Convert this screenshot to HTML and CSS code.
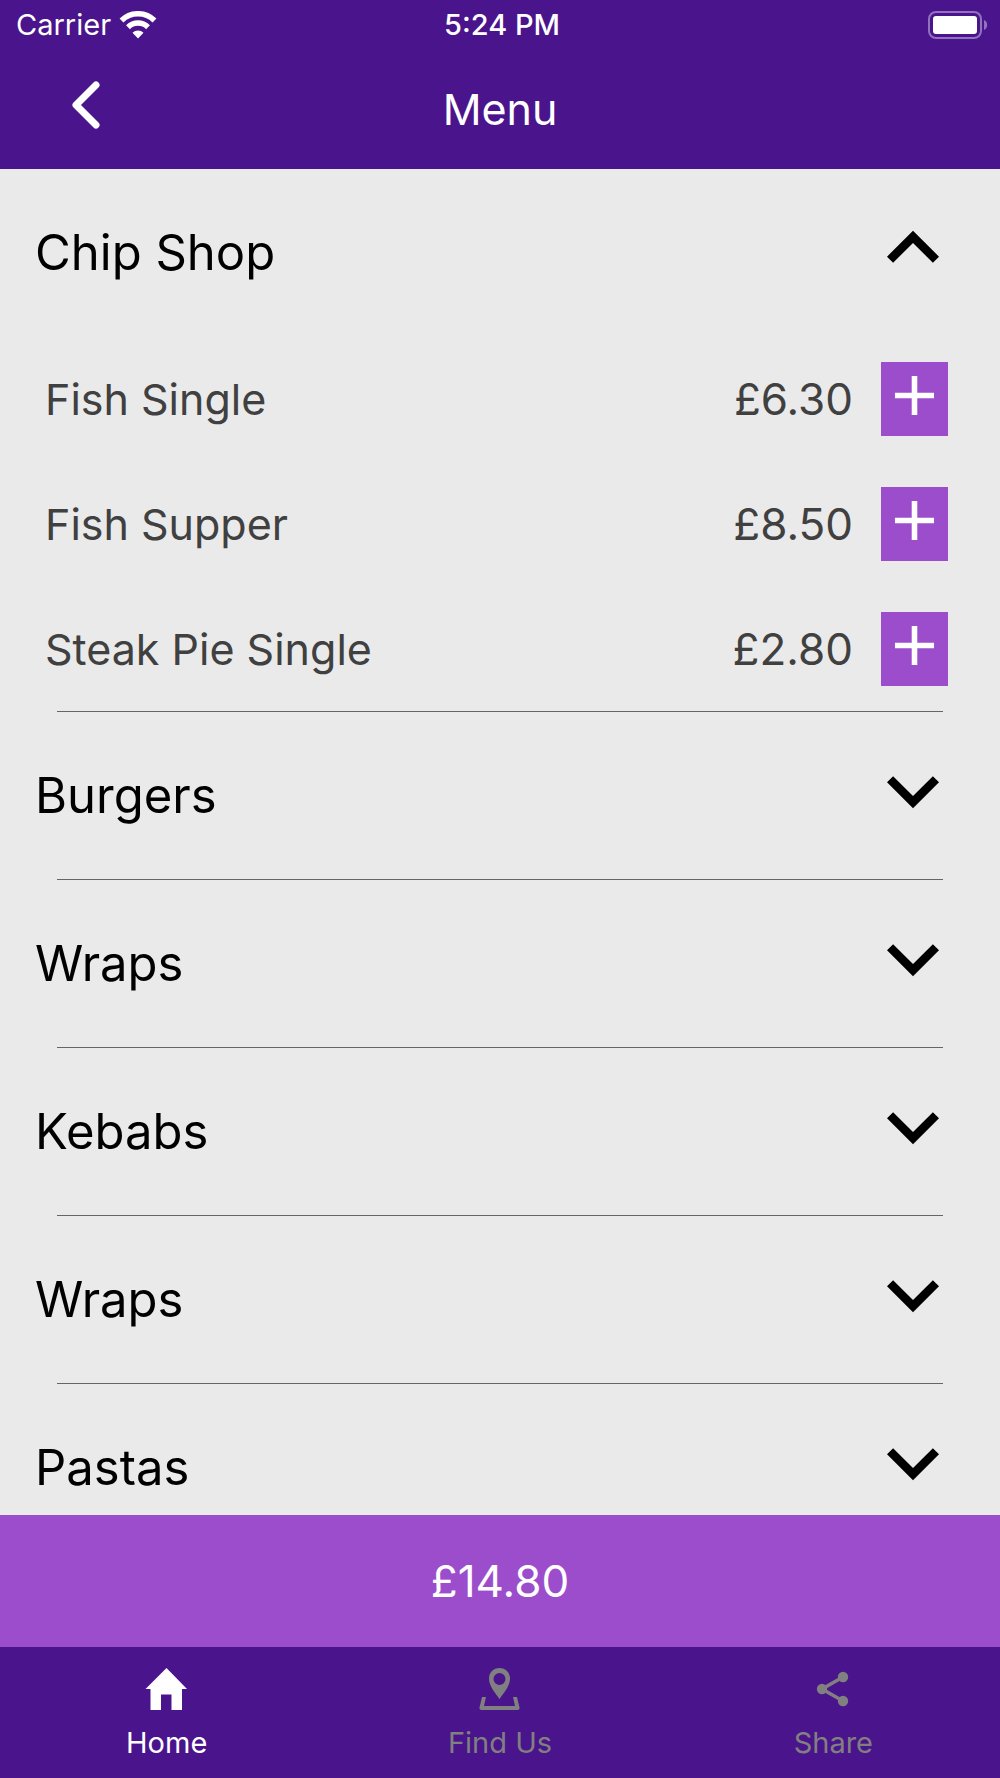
FILE: index.html
```html
<!DOCTYPE html>
<html lang="en">
<head>
  <meta charset="utf-8">
  <meta name="viewport" content="width=device-width, initial-scale=1">
  <title>Menu</title>
  <link rel="stylesheet" href="styles.css">
</head>
<body>
  <svg class="sprite" aria-hidden="true">
    <symbol id="chevron-down" viewBox="0 0 24 24"><path d="M16.59 8.59 12 13.17 7.41 8.59 6 10l6 6 6-6z"/></symbol>
    <symbol id="chevron-up" viewBox="0 0 24 24"><path d="M12 8l-6 6 1.41 1.41L12 10.83l4.59 4.58L18 14z"/></symbol>
    <symbol id="plus" viewBox="0 0 24 24"><path d="M19 13h-6v6h-2v-6H5v-2h6V5h2v6h6z"/></symbol>
  </svg>

  <div class="app">
    <header class="header">
      <div class="status">
        <div class="status-left">
          <span>Carrier</span>
          <svg class="wifi" viewBox="0 0 38 28" aria-hidden="true">
            <path d="M2.500 9.500a23.500 23.500 0 0 1 33 0" fill="none" stroke="#fff" stroke-width="5.500"/>
            <path d="M9 16.200a14.300 14.300 0 0 1 20 0" fill="none" stroke="#fff" stroke-width="5.500"/>
            <path d="M19 27.500l-5.500-5.700a8 8 0 0 1 11 0z" fill="#fff"/>
          </svg>
        </div>
        <time class="clock">5:24 PM</time>
        <svg class="battery" viewBox="0 0 60 28" aria-hidden="true">
          <rect x="1" y="1" width="52" height="26" rx="7" fill="none" stroke="#9272ba" stroke-width="2"/>
          <rect x="5" y="5" width="44" height="18" rx="3" fill="#fff"/>
          <path d="M56 9a5.500 5.500 0 0 1 0 10z" fill="#9272ba"/>
        </svg>
      </div>
      <div class="title-bar">
        <button class="back" type="button" aria-label="Back">
          <svg viewBox="0 0 28 48" aria-hidden="true"><path d="M24 4 4 24l20 20" fill="none" stroke="#fff" stroke-width="7" stroke-linecap="round" stroke-linejoin="round"/></svg>
        </button>
        <h1 class="title">Menu</h1>
      </div>
    </header>

    <main class="menu">
      <section class="category">
        <h2><button class="category-toggle" type="button" aria-expanded="true">Chip Shop<svg class="chevron" aria-hidden="true"><use href="#chevron-up"/></svg></button></h2>
        <ul class="items">
          <li class="item"><span class="item-name">Fish Single</span><span class="price">£6.30</span><button class="add" type="button" aria-label="Add Fish Single"><svg aria-hidden="true"><use href="#plus"/></svg></button></li>
          <li class="item"><span class="item-name">Fish Supper</span><span class="price">£8.50</span><button class="add" type="button" aria-label="Add Fish Supper"><svg aria-hidden="true"><use href="#plus"/></svg></button></li>
          <li class="item"><span class="item-name">Steak Pie Single</span><span class="price">£2.80</span><button class="add" type="button" aria-label="Add Steak Pie Single"><svg aria-hidden="true"><use href="#plus"/></svg></button></li>
        </ul>
      </section>
      <section class="category">
        <h2><button class="category-toggle" type="button" aria-expanded="false">Burgers<svg class="chevron" aria-hidden="true"><use href="#chevron-down"/></svg></button></h2>
      </section>
      <section class="category">
        <h2><button class="category-toggle" type="button" aria-expanded="false">Wraps<svg class="chevron" aria-hidden="true"><use href="#chevron-down"/></svg></button></h2>
      </section>
      <section class="category">
        <h2><button class="category-toggle" type="button" aria-expanded="false">Kebabs<svg class="chevron" aria-hidden="true"><use href="#chevron-down"/></svg></button></h2>
      </section>
      <section class="category">
        <h2><button class="category-toggle" type="button" aria-expanded="false">Wraps<svg class="chevron" aria-hidden="true"><use href="#chevron-down"/></svg></button></h2>
      </section>
      <section class="category">
        <h2><button class="category-toggle" type="button" aria-expanded="false">Pastas<svg class="chevron" aria-hidden="true"><use href="#chevron-down"/></svg></button></h2>
      </section>
    </main>

    <button class="total" type="button">£14.80</button>

    <nav class="tabs" aria-label="Main">
      <a class="tab tab-active" href="#home" aria-current="page">
        <svg viewBox="0 0 44 44" aria-hidden="true"><path d="M21.500 1 .500 22H5.500v21h10.500V27.500h10.500V43H37V22h5z" fill="currentColor"/></svg>
        <span>Home</span>
      </a>
      <a class="tab" href="#find-us">
        <svg viewBox="0 0 44 44" aria-hidden="true">
          <path fill="currentColor" fill-rule="evenodd" d="M21.500 1C15.500 1 11 5.500 11 11.500 11 18 15.500 24 21.500 32 27.500 24 32 18 32 11.500 32 5.500 27.500 1 21.500 1zm0 5a6 6 0 1 1 0 12 6 6 0 0 1 0-12z"/>
          <path fill="currentColor" d="M4 30h4L6 39h31L35 30h4l2.500 10.500c.300 1.500-.500 2.500-2 2.500H3.500c-1.500 0-2.300-1-2-2.500z"/>
        </svg>
        <span>Find Us</span>
      </a>
      <a class="tab" href="#share">
        <svg viewBox="0 0 44 44" aria-hidden="true">
          <path d="M32 10 11 22l21 12" fill="none" stroke="currentColor" stroke-width="3.500"/>
          <circle cx="32" cy="10" r="5.200" fill="currentColor"/>
          <circle cx="11" cy="22" r="5.200" fill="currentColor"/>
          <circle cx="32" cy="34" r="5.200" fill="currentColor"/>
        </svg>
        <span>Share</span>
      </a>
    </nav>
  </div>
</body>
</html>
```
FILE: styles.css
```css
* {
  box-sizing: border-box;
}

body,
h1,
h2,
ul {
  margin: 0;
  padding: 0;
  font-weight: 400;
}

body {
  font-family: Inter, "Liberation Sans", sans-serif;
  background: #eaeaea;
}

button {
  padding: 0;
  border: 0;
  background: none;
  color: inherit;
  font: inherit;
  cursor: pointer;
}

svg {
  display: block;
  flex: none;
}

.sprite {
  display: none;
}

.app {
  display: flex;
  flex-direction: column;
  height: 100vh;
}

.header {
  flex: none;
  background: #4a148c;
  color: #fff;
}

.status {
  display: grid;
  grid-template-columns: 1fr auto 1fr;
  align-items: center;
  height: 49px;
  padding: 0 12px 0 16px;
  font-size: 29px;
}

.status-left {
  display: flex;
  align-items: center;
  gap: 8px;
}

.wifi {
  width: 38px;
  height: 28px;
}

.clock {
  font-weight: 500;
}

.battery {
  width: 60px;
  height: 28px;
  justify-self: end;
}

.title-bar {
  display: grid;
  grid-template-columns: 1fr auto 1fr;
  align-items: center;
  height: 120px;
  padding: 0 72px;
}

.back {
  justify-self: start;
  padding-bottom: 8px;
}

.back svg {
  width: 28px;
  height: 48px;
}

.title {
  font-size: 43px;
}

.menu {
  flex: 1;
  min-height: 0;
  overflow-y: auto;
  scrollbar-width: none;
}

.category::after {
  content: "";
  display: block;
  height: 1px;
  margin: 0 57px;
  background: #666;
}

.category-toggle {
  display: flex;
  align-items: center;
  justify-content: space-between;
  width: 100%;
  height: 167px;
  padding: 0 35px;
  color: #000;
  font-size: 49px;
}

.chevron {
  width: 104px;
  height: 104px;
  margin-bottom: 10px;
}

.items {
  list-style: none;
}

.item {
  display: flex;
  align-items: center;
  height: 125px;
  padding: 0 52px 0 45px;
  color: #404040;
  font-size: 43px;
}

.item-name {
  flex: 1;
}

.price {
  margin-right: 28px;
  font-size: 44px;
}

.add {
  height: 74px;
  padding-bottom: 7px;
  background: #9c4dcc;
}

.add svg {
  width: 67px;
  height: 67px;
  fill: #fff;
}

.total {
  flex: none;
  height: 132px;
  background: #9c4dcc;
  color: #fff;
  font-size: 44px;
}

.tabs {
  display: grid;
  grid-template-columns: repeat(3, 1fr);
  flex: none;
  height: 131px;
  background: #4a148c;
}

.tab {
  display: flex;
  flex-direction: column;
  align-items: center;
  gap: 16px;
  padding-top: 20px;
  color: #808080;
  font-size: 29px;
  line-height: 32px;
  text-decoration: none;
}

.tab svg {
  width: 44px;
  height: 44px;
}

.tab-active {
  color: #fff;
}
```
